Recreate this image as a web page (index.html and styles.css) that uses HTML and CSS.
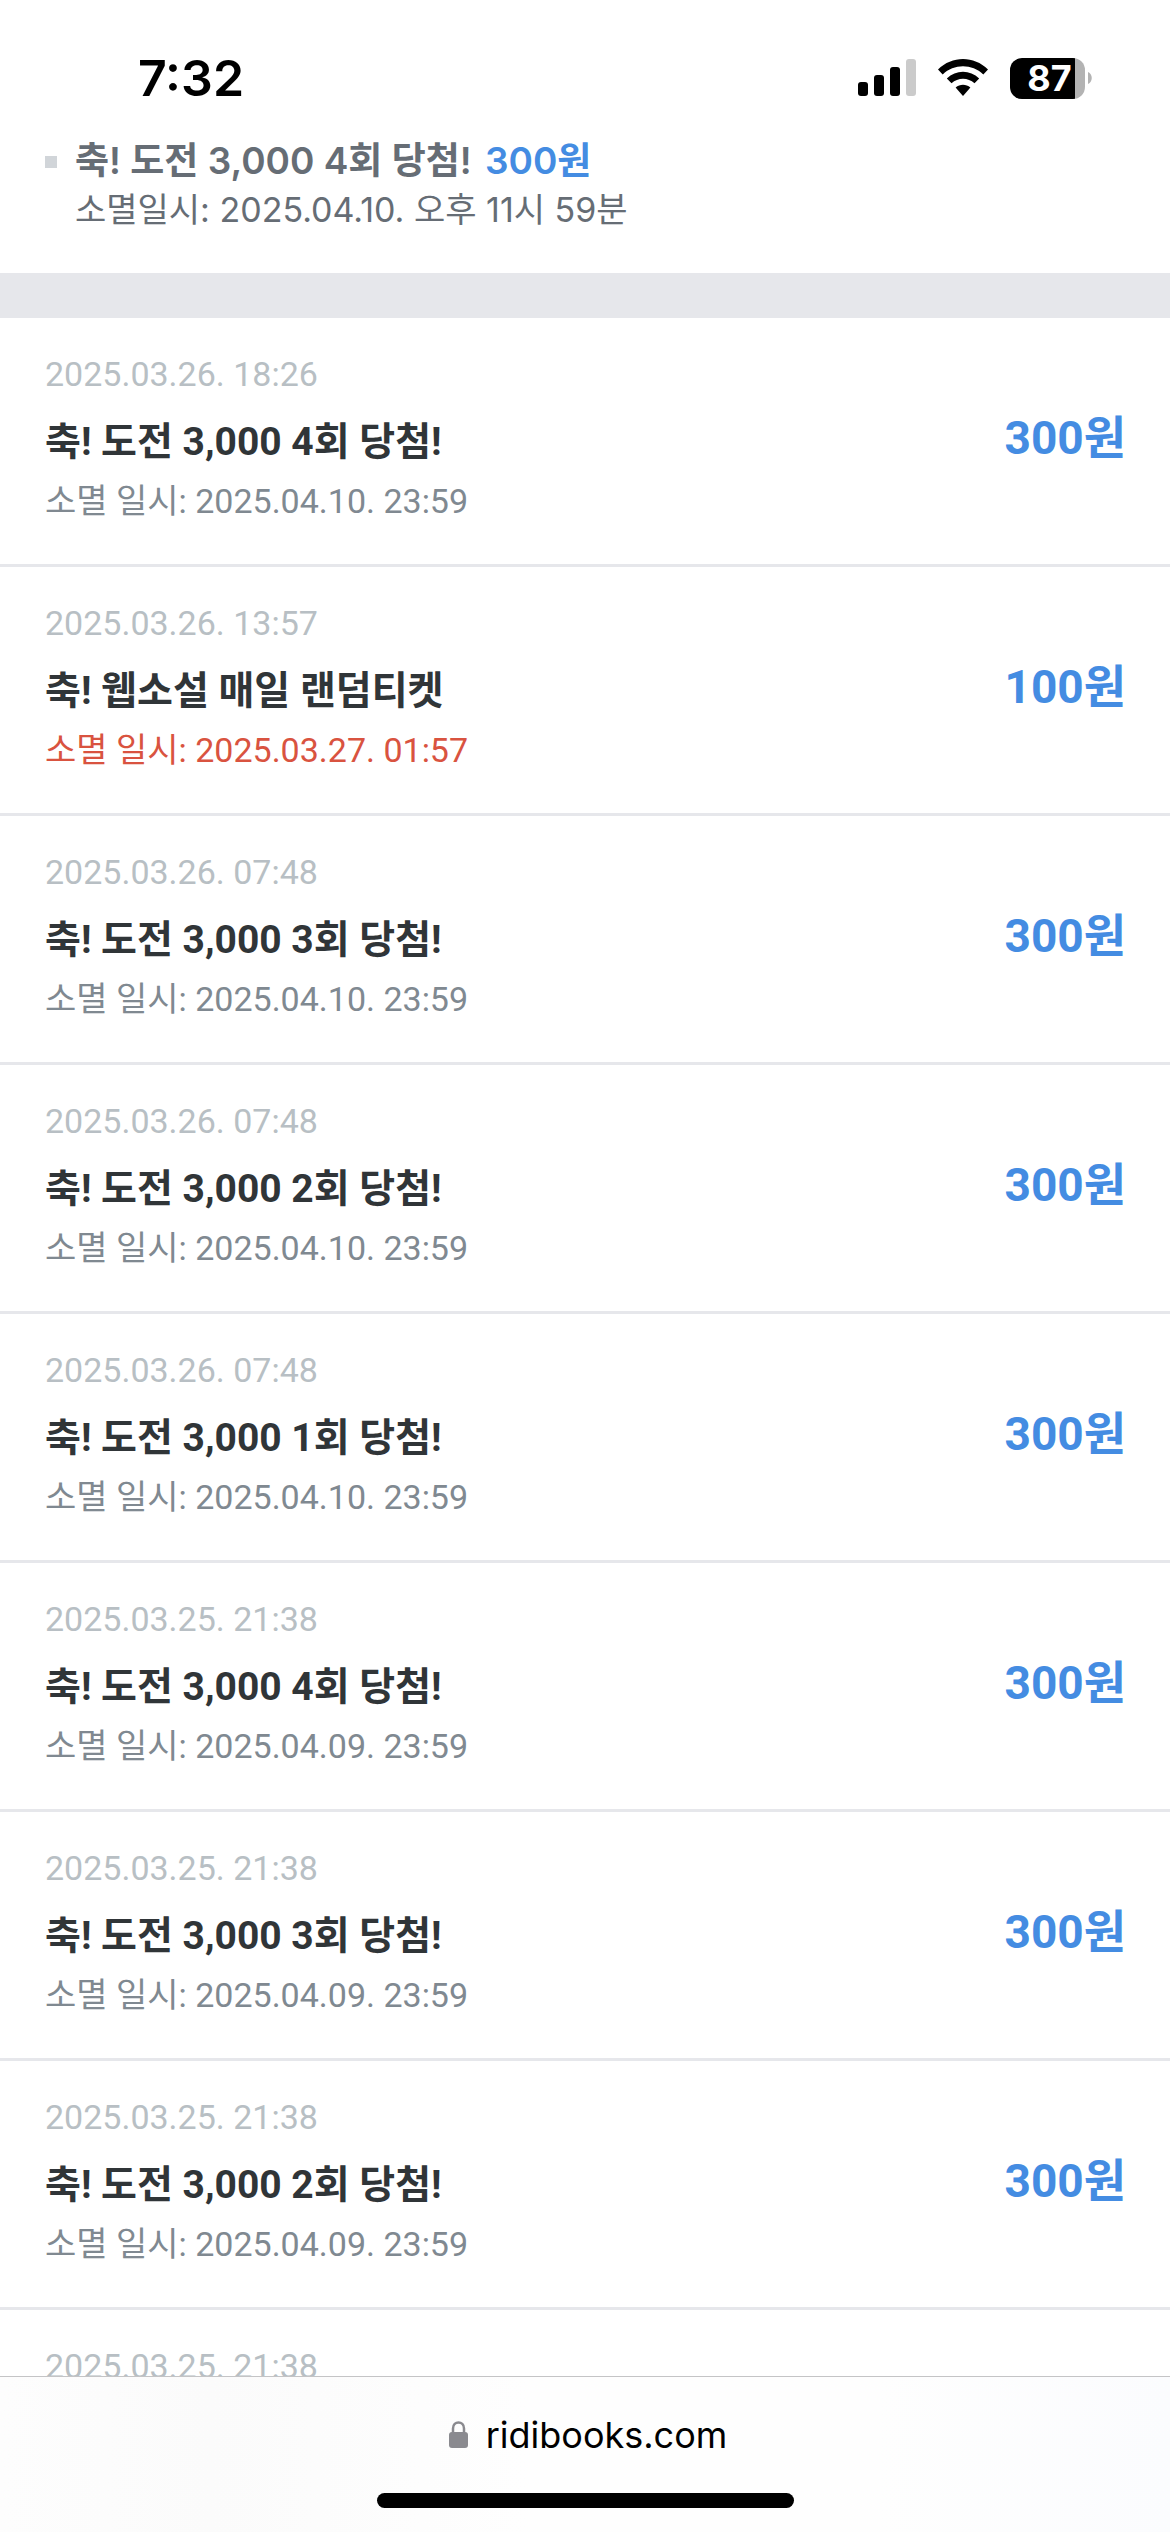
FILE: index.html
```
<!DOCTYPE html>
<html lang="ko">
<head>
    <meta charset="UTF-8">
    <meta name="viewport" content="width=device-width, initial-scale=1">
    <title>ridibooks.com</title>
    <link rel="stylesheet" href="styles.css">
</head>
<body>
<header class="status">
    <time class="clock">7:32</time>
    <div class="status_icons">
        <svg class="signal" width="58" height="38" viewBox="0 0 58 38">
            <rect x="0" y="23" width="10" height="14" rx="3"/>
            <rect x="16" y="16" width="10" height="21" rx="3"/>
            <rect x="32" y="8" width="10" height="29" rx="3"/>
            <rect x="48" y="0" width="10" height="37" rx="3" fill="#cbcbcb"/>
        </svg>
        <svg class="wifi" width="50" height="38" viewBox="0 0 50 38">
            <path d="M0 10.5C14-3.5 36-3.5 50 10.5L45.300 15.400C34 4.500 16 4.500 4.700 15.400Z"/>
            <path d="M8.800 19.400C18 10.600 32 10.600 41.200 19.400L36.500 24.300C30 18.200 20 18.200 13.500 24.300Z"/>
            <path d="M17.600 28.500C22 24.700 28 24.700 32.400 28.500L25 37Z"/>
        </svg>
        <div class="battery">
            <span class="level">87</span>
            <svg width="4" height="12" viewBox="0 0 4 12"><path d="M0 0C5 2 5 10 0 12Z" fill="#b3b3b3"/></svg>
        </div>
    </div>
</header>
<main class="page">
    <ul class="notice">
        <li>
            <p class="notice_title">축! 도전 3,000 4회 당첨! <strong>300원</strong></p>
            <p class="notice_date">소멸일시: 2025.04.10. 오후 11시 59분</p>
        </li>
    </ul>
    <ul class="points">
        <li>
            <div class="info">
                <p class="date">2025.03.26. 18:26</p>
                <h2 class="title">축! 도전 3,000 4회 당첨!</h2>
                <p class="expire">소멸 일시: 2025.04.10. 23:59</p>
            </div>
            <strong class="amount">300원</strong>
        </li>
        <li>
            <div class="info">
                <p class="date">2025.03.26. 13:57</p>
                <h2 class="title">축! 웹소설 매일 랜덤티켓</h2>
                <p class="expire soon">소멸 일시: 2025.03.27. 01:57</p>
            </div>
            <strong class="amount">100원</strong>
        </li>
        <li>
            <div class="info">
                <p class="date">2025.03.26. 07:48</p>
                <h2 class="title">축! 도전 3,000 3회 당첨!</h2>
                <p class="expire">소멸 일시: 2025.04.10. 23:59</p>
            </div>
            <strong class="amount">300원</strong>
        </li>
        <li>
            <div class="info">
                <p class="date">2025.03.26. 07:48</p>
                <h2 class="title">축! 도전 3,000 2회 당첨!</h2>
                <p class="expire">소멸 일시: 2025.04.10. 23:59</p>
            </div>
            <strong class="amount">300원</strong>
        </li>
        <li>
            <div class="info">
                <p class="date">2025.03.26. 07:48</p>
                <h2 class="title">축! 도전 3,000 1회 당첨!</h2>
                <p class="expire">소멸 일시: 2025.04.10. 23:59</p>
            </div>
            <strong class="amount">300원</strong>
        </li>
        <li>
            <div class="info">
                <p class="date">2025.03.25. 21:38</p>
                <h2 class="title">축! 도전 3,000 4회 당첨!</h2>
                <p class="expire">소멸 일시: 2025.04.09. 23:59</p>
            </div>
            <strong class="amount">300원</strong>
        </li>
        <li>
            <div class="info">
                <p class="date">2025.03.25. 21:38</p>
                <h2 class="title">축! 도전 3,000 3회 당첨!</h2>
                <p class="expire">소멸 일시: 2025.04.09. 23:59</p>
            </div>
            <strong class="amount">300원</strong>
        </li>
        <li>
            <div class="info">
                <p class="date">2025.03.25. 21:38</p>
                <h2 class="title">축! 도전 3,000 2회 당첨!</h2>
                <p class="expire">소멸 일시: 2025.04.09. 23:59</p>
            </div>
            <strong class="amount">300원</strong>
        </li>
        <li>
            <div class="info">
                <p class="date">2025.03.25. 21:38</p>
            </div>
        </li>
    </ul>
</main>
<footer class="toolbar">
    <button class="address" type="button">
        <svg width="19" height="28" viewBox="0 0 19 28">
            <rect x="0" y="11" width="19" height="16" rx="3" fill="#8a8a8f"/>
            <path d="M4 12V7.500C4 -0.500 15 -0.500 15 7.500V12" fill="none" stroke="#8a8a8f" stroke-width="2.500"/>
        </svg>
        <span>ridibooks.com</span>
    </button>
    <div class="home_bar"></div>
</footer>
</body>
</html>
```

FILE: styles.css
```
*{
    margin: 0;
    padding: 0;
    box-sizing: border-box;
}
body{
    display: flex;
    flex-direction: column;
    height: 100vh;
    overflow: hidden;
    background: #fff;
    font-family: Roboto, "Noto Sans CJK KR", sans-serif;
}
ul{
    list-style: none;
}

/* status bar */
.status{
    display: flex;
    flex: none;
    align-items: center;
    justify-content: space-between;
    height: 137px;
    padding: 19px 78px 0 138px;
    font-family: Inter, sans-serif;
}
.clock{
    font-size: 50px;
    font-weight: 600;
    line-height: 60px;
}
.status_icons{
    display: flex;
    align-items: center;
    gap: 22px;
}
.battery{
    display: flex;
    align-items: center;
    gap: 3px;
}
.level{
    width: 75px;
    height: 41px;
    padding-left: 4px;
    border-radius: 12px;
    background: linear-gradient(to right, #000 65px, #b3b3b3 65px);
    color: #fff;
    font-size: 36px;
    font-weight: 700;
    line-height: 41px;
    text-align: center;
}

/* list */
.page{
    flex: 1;
    min-height: 0;
    overflow: hidden;
}
.notice{
    padding: 0 45px 39px;
    border-bottom: 45px solid #e6e7eb;
    color: #666d75;
    font-family: Inter, "Noto Sans CJK KR", sans-serif;
}
.notice li{
    display: grid;
    grid-template-columns: 12px 1fr;
    column-gap: 18px;
}
.notice li:before{
    content: "";
    width: 12px;
    height: 12px;
    margin-top: 19px;
    background: #d1d5d9;
}
.notice_title{
    font-size: 37px;
    font-weight: 600;
    line-height: 48px;
}
.notice_title strong{
    margin-left: 4px;
    color: #448ce2;
    font-weight: 600;
}
.notice_date{
    grid-column: 2;
    font-size: 34px;
    line-height: 49px;
}
.points li{
    display: flex;
    align-items: center;
    justify-content: space-between;
    padding: 36px 44px 43px 45px;
    border-bottom: 3px solid #e6e7eb;
}
.date{
    color: #b8bfc4;
    font-size: 34px;
    line-height: 40px;
}
.title{
    margin: 20px 0 11px;
    color: #303538;
    font-size: 39px;
    line-height: 56px;
}
.expire{
    color: #808991;
    font-size: 34px;
    line-height: 40px;
}
.soon{
    color: #d95340;
}
.amount{
    color: #448ce2;
    font-size: 46px;
    line-height: 66px;
}

/* browser bar */
.toolbar{
    display: flex;
    flex: none;
    flex-direction: column;
    align-items: center;
    justify-content: space-between;
    height: 156px;
    padding: 30px 0 24px;
    border-top: 1px solid #c4c4c6;
    background: linear-gradient(to right, #fdfdfd, #fbfbfb 18%, #fefefe 45%, #fefefe 75%, #fbfcfe);
}
.address{
    display: flex;
    align-items: center;
    gap: 18px;
    padding-left: 6px;
    border: 0;
    background: none;
    color: #000;
    font-family: Inter, sans-serif;
    font-size: 36px;
    line-height: 56px;
}
.home_bar{
    width: 417px;
    height: 15px;
    border-radius: 8px;
    background: #000;
}
```
